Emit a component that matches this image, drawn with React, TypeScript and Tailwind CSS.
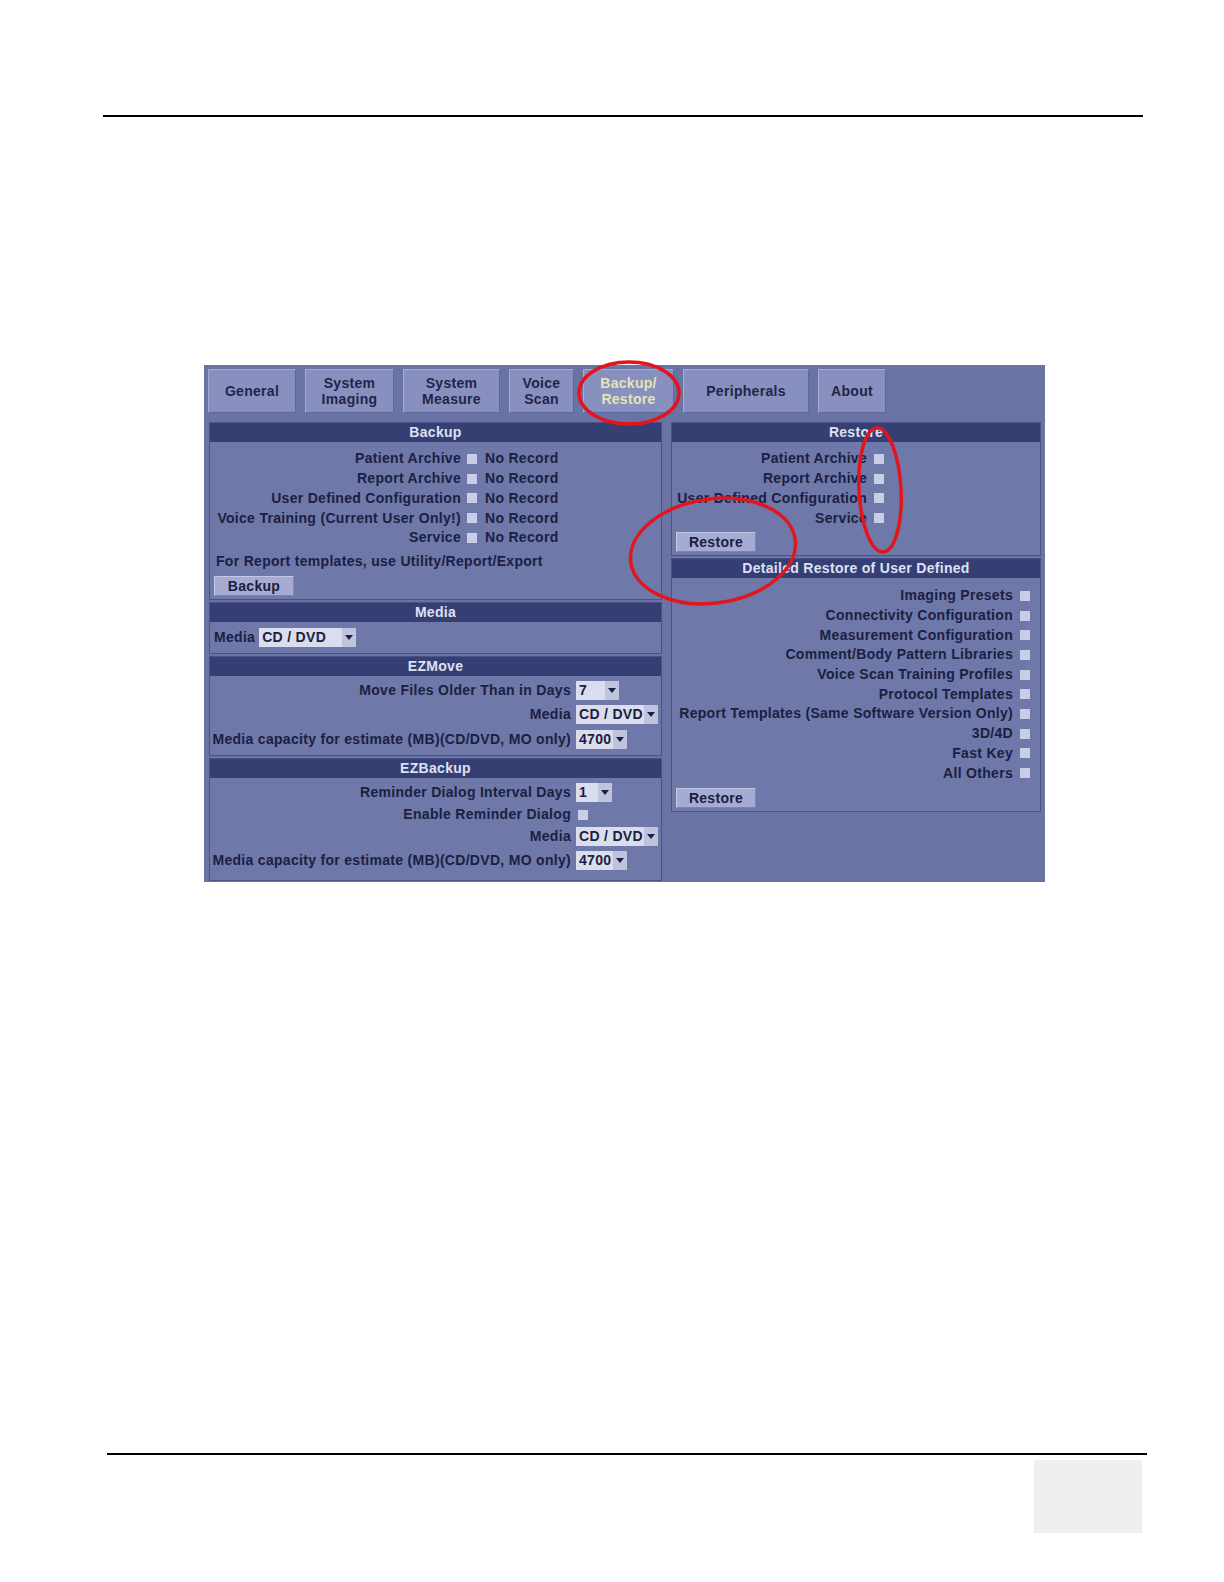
const font = "font-['Liberation_Sans',Arial,sans-serif]";

function Check({ className = "" }: { className?: string }) {
  return <span className={`inline-block w-[10px] h-[10px] bg-[#c9cde7] shrink-0 ${className}`} />;
}

function Select({ value, box, className = "" }: { value: string; box: string; className?: string }) {
  return (
    <div className={`flex h-[19px] shrink-0 ${className}`}>
      <div className={`${box} bg-[#dadded] pl-[3px] leading-[19px] text-[#1b2042]`}>{value}</div>
      <div className="w-[14px] bg-[#bfc3de] flex items-center justify-center">
        <svg width="8" height="5" viewBox="0 0 8 5">
          <path d="M0 0h8L4 5z" fill="#1b2042" />
        </svg>
      </div>
    </div>
  );
}

function Btn({ children }: { children: string }) {
  return (
    <div className="w-[80px] h-[20px] bg-[#a5abd2] border-t border-l border-[#c3c8e6] border-b border-r border-b-[#7c84b3] border-r-[#7c84b3] text-center leading-[18px] text-[#1b2042]">
      {children}
    </div>
  );
}

function Panel({ title, children, className = "" }: { title: string; children: React.ReactNode; className?: string }) {
  return (
    <div className={`border border-[#4a5388] bg-[#6e78a9] ${className}`}>
      <div className="h-[19px] bg-[#363f74] text-center leading-[19px] text-[#dde1f3]">{title}</div>
      {children}
    </div>
  );
}

function Tab({ lines, w, active = false }: { lines: string[]; w: string; active?: boolean }) {
  return (
    <div
      className={`${w} h-[44px] flex flex-col items-center justify-center bg-[#8890bf] border-t border-l border-[#a4abd5] border-b border-r border-b-[#5f689b] border-r-[#5f689b] leading-[16px] ${
        active ? "text-[#e6e3b4]" : "text-[#1f2548]"
      }`}
    >
      {lines.map((l) => (
        <div key={l}>{l}</div>
      ))}
    </div>
  );
}

function Label({ w, children }: { w: string; children: string }) {
  return <div className={`${w} flex justify-end whitespace-nowrap shrink-0`}>{children}</div>;
}

const backupRows = [
  "Patient Archive",
  "Report Archive",
  "User Defined Configuration",
  "Voice Training (Current User Only!)",
  "Service",
];

const restoreRows = ["Patient Archive", "Report Archive", "User Defined Configuration", "Service"];

const detailRows = [
  "Imaging Presets",
  "Connectivity Configuration",
  "Measurement Configuration",
  "Comment/Body Pattern Libraries",
  "Voice Scan Training Profiles",
  "Protocol Templates",
  "Report Templates (Same Software Version Only)",
  "3D/4D",
  "Fast Key",
  "All Others",
];

export default function App() {
  return (
    <div className={`w-[1224px] h-[1582px] bg-white ${font} pt-[115px]`}>
      <div className="ml-[103px] w-[1040px] h-[2px] bg-black" />

      {/* UI screenshot */}
      <div className="relative ml-[204px] mt-[248px] w-[841px] h-[517px] bg-[#6a74a4] pt-[4px] pb-[1px] px-[4px] flex flex-col text-[14px] tracking-[0.3px] font-bold text-[#1b2042]">
        <div className="flex gap-[9px]">
          <Tab lines={["General"]} w="w-[88px]" />
          <Tab lines={["System", "Imaging"]} w="w-[89px]" />
          <Tab lines={["System", "Measure"]} w="w-[97px]" />
          <Tab lines={["Voice", "Scan"]} w="w-[65px]" />
          <Tab lines={["Backup/", "Restore"]} w="w-[91px]" active />
          <Tab lines={["Peripherals"]} w="w-[126px]" />
          <Tab lines={["About"]} w="w-[68px]" />
        </div>

        <div className="flex-1 min-h-0 flex gap-[9px] mt-[9px] ml-[1px]">
          {/* left column */}
          <div className="w-[453px] flex flex-col gap-[2px]">
            <Panel title="Backup">
              <div className="pt-[7px] pl-[4px] pb-[3px]">
                {backupRows.map((r) => (
                  <div key={r} className="flex items-center h-[19.75px]">
                    <Label w="w-[247px]">{r}</Label>
                    <Check className="ml-[6px]" />
                    <div className="ml-[8px]">No Record</div>
                  </div>
                ))}
                <div className="mt-[3px] h-[20px] leading-[20px] pl-[2px]">For Report templates, use Utility/Report/Export</div>
                <div className="mt-[5px]">
                  <Btn>Backup</Btn>
                </div>
              </div>
            </Panel>

            <Panel title="Media">
              <div className="flex items-center pt-[5px] pb-[5px] pl-[4px]">
                <div>Media</div>
                <Select value="CD / DVD" box="w-[83px]" className="ml-[4px]" />
              </div>
            </Panel>

            <Panel title="EZMove">
              <div className="pt-[3px] pb-[3px] pl-[4px]">
                <div className="flex items-center h-[24px]">
                  <Label w="w-[357px]">Move Files Older Than in Days</Label>
                  <Select value="7" box="w-[29px]" className="ml-[5px]" />
                </div>
                <div className="flex items-center h-[24px]">
                  <Label w="w-[357px]">Media</Label>
                  <Select value="CD / DVD" box="w-[68px]" className="ml-[5px]" />
                </div>
                <div className="flex items-center h-[25px]">
                  <Label w="w-[357px]">Media capacity for estimate (MB)(CD/DVD, MO only)</Label>
                  <Select value="4700" box="w-[37px]" className="ml-[5px]" />
                </div>
              </div>
            </Panel>

            <Panel title="EZBackup" className="flex-1">
              <div className="pt-[4px] pl-[4px]">
                <div className="flex items-center h-[22px]">
                  <Label w="w-[357px]">Reminder Dialog Interval Days</Label>
                  <Select value="1" box="w-[22px]" className="ml-[5px]" />
                </div>
                <div className="flex items-center h-[22px]">
                  <Label w="w-[357px]">Enable Reminder Dialog</Label>
                  <Check className="ml-[7px]" />
                </div>
                <div className="flex items-center h-[22px]">
                  <Label w="w-[357px]">Media</Label>
                  <Select value="CD / DVD" box="w-[68px]" className="ml-[5px]" />
                </div>
                <div className="flex items-center h-[22px] mt-[2px]">
                  <Label w="w-[357px]">Media capacity for estimate (MB)(CD/DVD, MO only)</Label>
                  <Select value="4700" box="w-[37px]" className="ml-[5px]" />
                </div>
              </div>
            </Panel>
          </div>

          {/* right column */}
          <div className="w-[370px] flex flex-col gap-[2px]">
            <Panel title="Restore">
              <div className="pt-[7px] pl-[4px] pb-[3px]">
                {restoreRows.map((r) => (
                  <div key={r} className="flex items-center h-[19.75px]">
                    <Label w="w-[191px]">{r}</Label>
                    <Check className="ml-[7px]" />
                  </div>
                ))}
                <div className="mt-[4px]">
                  <Btn>Restore</Btn>
                </div>
              </div>
            </Panel>

            <Panel title="Detailed Restore of User Defined">
              <div className="pt-[8px] pl-[4px] pb-[3px]">
                {detailRows.map((r) => (
                  <div key={r} className="flex items-center h-[19.7px]">
                    <Label w="w-[337px]">{r}</Label>
                    <Check className="ml-[7px]" />
                  </div>
                ))}
                <div className="mt-[5px]">
                  <Btn>Restore</Btn>
                </div>
              </div>
            </Panel>
          </div>
        </div>

        {/* red annotation ellipses */}
        <svg className="absolute left-0 top-0 overflow-visible pointer-events-none" width="841" height="517">
          <ellipse cx="425" cy="28" rx="50" ry="31" fill="none" stroke="#e5141b" strokeWidth="3.5" />
          <ellipse cx="676" cy="125" rx="21" ry="62" fill="none" stroke="#e5141b" strokeWidth="3.5" transform="rotate(-3 676 125)" />
          <ellipse cx="509" cy="186" rx="83" ry="52" fill="none" stroke="#e5141b" strokeWidth="3.5" transform="rotate(-8 509 186)" />
        </svg>
      </div>

      <div className="ml-[107px] mt-[571px] w-[1040px] h-[2px] bg-black" />
      <div className="ml-[1034px] mt-[5px] w-[108px] h-[73px] bg-[#efefef]" />
    </div>
  );
}
